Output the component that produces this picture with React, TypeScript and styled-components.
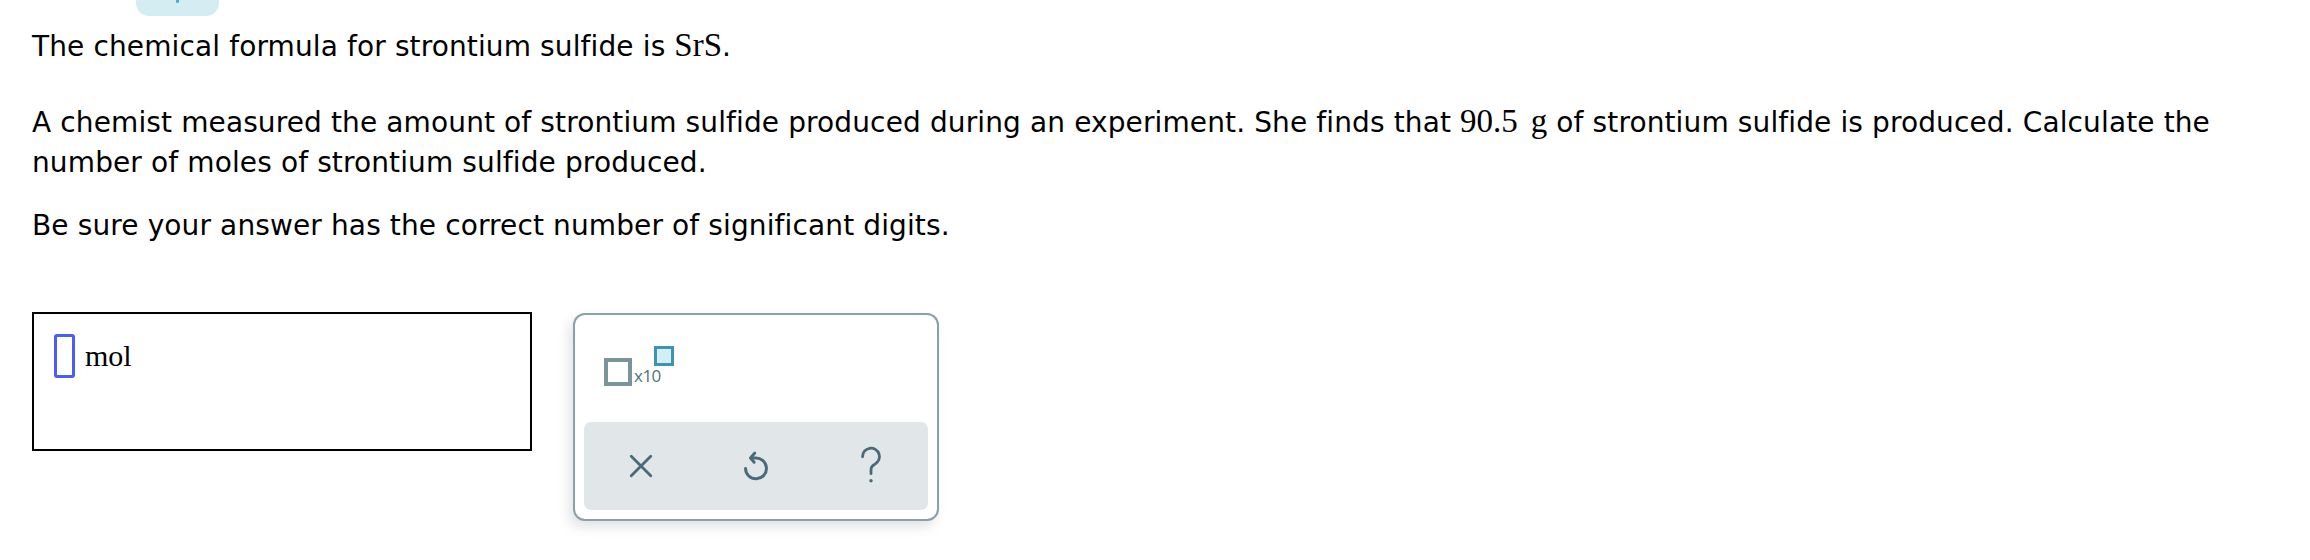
import styled, { createGlobalStyle } from 'styled-components';

const GlobalStyle = createGlobalStyle`
  html, body {
    margin: 0;
    padding: 0;
    background: #ffffff;
  }
  body {
    font-family: "DejaVu Sans", Verdana, sans-serif;
    color: #000000;
  }
`;

const Page = styled.div`
  display: flex;
  flex-direction: column;
  width: 2310px;
  height: 560px;
  overflow: hidden;
`;

const TopTab = styled.div`
  margin-left: 136px;
  width: 83px;
  height: 16px;
  background: #d4edf2;
  border-radius: 0 0 13px 13px;
  display: flex;
  justify-content: center;
`;

const TabMark = styled.span`
  width: 3px;
  height: 3px;
  border-radius: 0 0 2px 2px;
  background: #4ea9cb;
`;

const Question = styled.div`
  padding: 11px 16px 0 32px;
`;

const Para = styled.p<{ $gap?: number }>`
  margin: ${(p) => p.$gap ?? 0}px 0 0;
  font-size: 28px;
  line-height: 40px;
  letter-spacing: 0.12px;
`;

const MathText = styled.span<{ $size?: number; $space?: number }>`
  font-family: "Liberation Serif", "Times New Roman", serif;
  font-size: ${(p) => p.$size ?? 33}px;
  line-height: 1;
  letter-spacing: 0;
  margin-left: ${(p) => p.$space ?? 0}px;
`;

const AnswerRow = styled.div`
  display: flex;
  align-items: flex-start;
  gap: 41px;
  margin-top: 66px;
  padding-left: 32px;
`;

const AnswerBox = styled.div`
  box-sizing: border-box;
  width: 500px;
  height: 139px;
  border: 2px solid #000000;
  padding: 20px 20px;
  display: flex;
  align-items: flex-start;
`;

const Entry = styled.div`
  display: flex;
  align-items: center;
  gap: 10px;
`;

const Blank = styled.span`
  box-sizing: border-box;
  width: 21px;
  height: 44px;
  border: 3px solid #4a5df6;
  border-radius: 3px;
`;

const Unit = styled.span`
  font-family: "Liberation Serif", "Times New Roman", serif;
  font-size: 30px;
  line-height: 1;
`;

const Panel = styled.div`
  box-sizing: border-box;
  width: 366px;
  height: 208px;
  margin-top: 1px;
  border: 2px solid #8a9fa7;
  border-radius: 12px;
  background: #ffffff;
  box-shadow: -4px 6px 12px rgba(40, 60, 70, 0.14);
  padding: 0 9px 9px;
  display: flex;
  flex-direction: column;
`;

const SciButton = styled.div`
  display: flex;
  align-items: flex-end;
  height: 40px;
  margin: 31px 0 0 20px;
`;

const BaseSquare = styled.span`
  box-sizing: border-box;
  width: 28px;
  height: 28px;
  border: 4px solid #7b939b;
`;

const Times = styled.span`
  font-family: "Open Sans", "Liberation Sans", sans-serif;
  font-size: 17px;
  line-height: 1;
  color: #52707c;
  margin: 0 0 2px 2px;
  letter-spacing: -0.5px;
`;

const ExpSquare = styled.span`
  box-sizing: border-box;
  align-self: flex-start;
  width: 20px;
  height: 20px;
  margin-left: -7px;
  border: 3px solid #3b96b2;
  background: #d5eef3;
`;

const ActionBar = styled.div`
  margin-top: auto;
  height: 88px;
  border-radius: 7px;
  background: #e1e6e8;
  display: flex;
`;

const ActionButton = styled.button`
  flex: 1;
  border: none;
  background: transparent;
  padding: 0;
  display: flex;
  align-items: center;
  justify-content: center;
  color: #4a6a78;
`;

const ClearIcon = () => (
  <svg width="26" height="26" viewBox="0 0 24 24" fill="none" stroke="currentColor" strokeWidth="2.6" strokeLinecap="round">
    <path d="M3 3 L21 21 M21 3 L3 21" />
  </svg>
);

const UndoIcon = () => (
  <svg width="30" height="32" viewBox="0 0 24 26" fill="none" stroke="currentColor" strokeWidth="2.4" strokeLinecap="round" strokeLinejoin="round">
    <path d="M3.5 15 A8.5 8.5 0 1 0 11 6.5 L8 6.5" />
    <path d="M11 2.5 L7.5 6.5 L10.5 10" />
  </svg>
);

const HelpIcon = () => (
  <svg width="22" height="40" viewBox="0 0 14 26" fill="none" stroke="currentColor" strokeWidth="1.8" strokeLinecap="round">
    <path d="M1.5 7 A5.5 5.5 0 1 1 9.5 11.8 C8 12.6 7 13.6 7 15.2 L7 18" />
    <circle cx="7" cy="22.6" r="1.1" fill="currentColor" stroke="none" />
  </svg>
);

export default function App() {
  return (
    <>
      <GlobalStyle />
      <Page>
        <TopTab>
          <TabMark />
        </TopTab>
        <Question>
          <Para>
            The chemical formula for strontium sulfide is <MathText>SrS</MathText>.
          </Para>
          <Para $gap={36}>
            A chemist measured the amount of strontium sulfide produced during an experiment. She finds that{' '}
            <MathText>90.5</MathText>
            <MathText $space={13}>g</MathText> of strontium sulfide is produced. Calculate the number of moles of
            strontium sulfide produced.
          </Para>
          <Para $gap={23}>Be sure your answer has the correct number of significant digits.</Para>
        </Question>
        <AnswerRow>
          <AnswerBox>
            <Entry>
              <Blank />
              <Unit>mol</Unit>
            </Entry>
          </AnswerBox>
          <Panel>
            <SciButton>
              <BaseSquare />
              <Times>x10</Times>
              <ExpSquare />
            </SciButton>
            <ActionBar>
              <ActionButton aria-label="clear">
                <ClearIcon />
              </ActionButton>
              <ActionButton aria-label="undo">
                <UndoIcon />
              </ActionButton>
              <ActionButton aria-label="help">
                <HelpIcon />
              </ActionButton>
            </ActionBar>
          </Panel>
        </AnswerRow>
      </Page>
    </>
  );
}
